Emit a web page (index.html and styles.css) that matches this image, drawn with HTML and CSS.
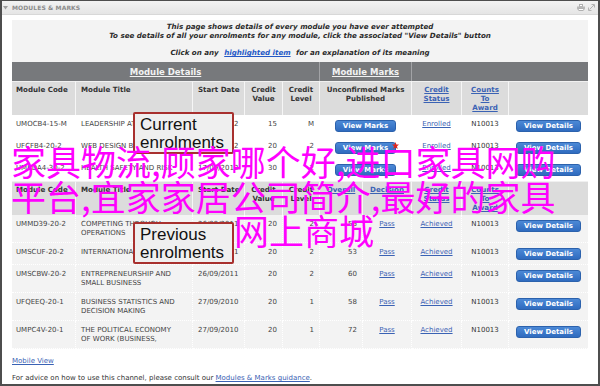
FILE: index.html
```html
<!DOCTYPE html>
<html lang="en">
<head>
    <meta charset="UTF-8">
    <meta name="viewport" content="width=device-width, initial-scale=1.0">
    <title>Modules &amp; Marks</title>
    <link rel="stylesheet" href="styles.css">
</head>
<body>
    <div class="portlet">
        <!-- title bar -->
        <div class="portlet-header">
            <svg class="toggle" width="5" height="4" viewBox="0 0 5 4"><path d="M0 0H5L2.5 3.5Z" fill="#a0a0a0"/></svg>
            <span class="portlet-title">MODULES &amp; MARKS</span>
            <span class="portlet-tools">
                <svg width="8" height="7" viewBox="0 0 8 7"><rect x="2.5" y="0.5" width="3" height="2" fill="#fff" stroke="#b0b0b0"/><rect x="0" y="2.5" width="8" height="3" fill="#b8b8b8"/><rect x="2" y="4.5" width="4" height="2" fill="#fff" stroke="#b0b0b0"/></svg>
                <svg width="7" height="7" viewBox="0 0 7 7"><path d="M1.5 5.5L6 1M3.5 0.5H6.5V3.5M0.5 3.5V6.5H3.5" fill="none" stroke="#b4b4b4"/></svg>
            </span>
        </div>

        <div class="portlet-body">
            <div class="intro">
                <p>This page shows details of every module you have ever attempted<br>
                To see details of all your enrolments for any module, click the associated "View Details" button</p>
                <p>Click on any <a href="#">highlighted item</a> for an explanation of its meaning</p>
            </div>

            <table class="marks">
                <colgroup>
                    <col style="width:64px"><col style="width:117px"><col style="width:52px"><col style="width:38px"><col style="width:37px">
                    <col style="width:43px"><col style="width:49px"><col style="width:50px"><col style="width:47px"><col style="width:79px">
                </colgroup>
                <tr class="group-head">
                    <th colspan="5"><a href="#">Module Details</a></th>
                    <th colspan="2"><a href="#">Module Marks</a></th>
                    <th colspan="3"></th>
                </tr>

                <!-- current enrolments -->
                <tr class="col-head">
                    <th class="left">Module Code</th>
                    <th class="left">Module Title</th>
                    <th class="left">Start Date</th>
                    <th>Credit Value</th>
                    <th>Credit Level</th>
                    <th colspan="2">Unconfirmed Marks Published</th>
                    <th><a href="#">Credit Status</a></th>
                    <th><a href="#">Counts<br>To<br>Award</a></th>
                    <th></th>
                </tr>
                <tr class="current">
                    <td>UMOCB4-15-M</td>
                    <td>LEADERSHIP AT WORK</td>
                    <td>24/09/2012</td>
                    <td class="num">15</td>
                    <td class="num">M</td>
                    <td colspan="2" class="mid"><a class="btn" href="#">View Marks</a></td>
                    <td class="mid"><a href="#">Enrolled</a></td>
                    <td class="mid">N10013</td>
                    <td class="mid"><a class="btn" href="#">View Details</a></td>
                </tr>
                <tr class="current">
                    <td>UFCFB4-20-2</td>
                    <td>WEB DESIGN BASICS</td>
                    <td>24/09/2012</td>
                    <td class="num">20</td>
                    <td class="num">2</td>
                    <td colspan="2" class="mid">
                        <span class="btn-wrap">
                            <a class="btn" href="#">View Marks</a>
                            <svg class="new-star" width="7" height="7" viewBox="0 0 7 7"><path d="M3.5 0L4.4 2.4L7 2.6L5 4.2L5.7 7L3.5 5.5L1.3 7L2 4.2L0 2.6L2.6 2.4Z" fill="#e0261e"/></svg>
                        </span>
                    </td>
                    <td class="mid"><a href="#">Enrolled</a></td>
                    <td class="mid">N10013</td>
                    <td class="mid"><a class="btn" href="#">View Details</a></td>
                </tr>
                <tr class="current">
                    <td>UMKDA4-30-2</td>
                    <td>HEALTH SAFETY AND RISK</td>
                    <td>17/09/2012</td>
                    <td class="num">30</td>
                    <td class="num">2</td>
                    <td colspan="2" class="mid"><a class="btn" href="#">View Marks</a></td>
                    <td class="mid"><a href="#">Enrolled</a></td>
                    <td class="mid">N10013</td>
                    <td class="mid"><a class="btn" href="#">View Details</a></td>
                </tr>

                <!-- previous enrolments -->
                <tr class="col-head">
                    <th class="left">Module Code</th>
                    <th class="left">Module Title</th>
                    <th class="left">Start Date</th>
                    <th>Credit Value</th>
                    <th>Credit Level</th>
                    <th><a href="#">Overall</a></th>
                    <th><a href="#">Decision</a></th>
                    <th><a href="#">Credit Status</a></th>
                    <th><a href="#">Counts<br>To<br>Award</a></th>
                    <th></th>
                </tr>
                <tr class="previous">
                    <td>UMMD39-20-2</td>
                    <td>COMPETING THROUGH<br>OPERATIONS</td>
                    <td>26/09/2011</td>
                    <td class="num">20</td>
                    <td class="num">2</td>
                    <td class="num">56</td>
                    <td class="mid"><a href="#">Pass</a></td>
                    <td class="mid"><a href="#">Achieved</a></td>
                    <td class="mid">N10013</td>
                    <td class="mid"><a class="btn" href="#">View Details</a></td>
                </tr>
                <tr class="previous">
                    <td>UMSCUF-20-2</td>
                    <td>INTERNATIONAL TRADE</td>
                    <td>26/09/2011</td>
                    <td class="num">20</td>
                    <td class="num">2</td>
                    <td class="num">53</td>
                    <td class="mid"><a href="#">Pass</a></td>
                    <td class="mid"><a href="#">Achieved</a></td>
                    <td class="mid">N10013</td>
                    <td class="mid"><a class="btn" href="#">View Details</a></td>
                </tr>
                <tr class="previous">
                    <td>UMSCBW-20-2</td>
                    <td>ENTREPRENEURSHIP AND<br>SMALL BUSINESS</td>
                    <td>26/09/2011</td>
                    <td class="num">20</td>
                    <td class="num">2</td>
                    <td class="num">60</td>
                    <td class="mid"><a href="#">Pass</a></td>
                    <td class="mid"><a href="#">Achieved</a></td>
                    <td class="mid">N10013</td>
                    <td class="mid"><a class="btn" href="#">View Details</a></td>
                </tr>
                <tr class="previous">
                    <td>UFQEEQ-20-1</td>
                    <td>BUSINESS STATISTICS AND<br>DECISION MAKING</td>
                    <td>27/09/2010</td>
                    <td class="num">20</td>
                    <td class="num">1</td>
                    <td class="num">58</td>
                    <td class="mid"><a href="#">Pass</a></td>
                    <td class="mid"><a href="#">Achieved</a></td>
                    <td class="mid">N10013</td>
                    <td class="mid"><a class="btn" href="#">View Details</a></td>
                </tr>
                <tr class="previous">
                    <td>UMPC4V-20-1</td>
                    <td>THE POLITICAL ECONOMY<br>OF WORK (BUSINESS,</td>
                    <td>27/09/2010</td>
                    <td class="num">20</td>
                    <td class="num">1</td>
                    <td class="num">72</td>
                    <td class="mid"><a href="#">Pass</a></td>
                    <td class="mid"><a href="#">Achieved</a></td>
                    <td class="mid">N10013</td>
                    <td class="mid"><a class="btn" href="#">View Details</a></td>
                </tr>
            </table>

            <div class="footer">
                <a href="#">Mobile View</a>
                <p>For advice on how to use this channel, please consult our <a href="#">Modules &amp; Marks guidance</a>.</p>
            </div>
        </div>

        <!-- annotations drawn over the page -->
        <div class="callout callout-current">Current<br>enrolments</div>
        <div class="callout callout-previous">Previous<br>enrolments</div>

        <div class="watermark">
            <div>家具物流,顾家哪个好,进口家具网购</div>
            <div>平台,宜家家居公司简介,最好的家具</div>
            <div class="watermark-last">网上商城</div>
        </div>
    </div>
</body>
</html>
```

FILE: styles.css
```css
/* reset */
* {
    margin: 0;
    padding: 0;
    box-sizing: border-box;
}

body {
    font-family: "DejaVu Sans", Verdana, sans-serif;
    font-size: 7px;
    color: #444;
    background: #fff;
}

a {
    color: #3a62b4;
    text-decoration: underline;
}

/* outer frame */
.portlet {
    position: relative;
    width: 600px;
    height: 386px;
    border: 2px solid #4e4e4e;
    border-top-width: 1px;
    overflow: hidden;
}

.portlet-header {
    height: 14px;
    display: flex;
    align-items: center;
    padding: 0 3px 0 1px;
    background: linear-gradient(#f3f3f3, #e5e5e5);
    border-bottom: 1px solid #d8d8d8;
}

.toggle {
    margin-right: 4px;
}

.portlet-title {
    flex: 1;
    font-size: 6px;
    font-weight: bold;
    color: #8c8c8c;
    letter-spacing: 0.1px;
}

.portlet-tools {
    display: flex;
    gap: 3px;
    align-items: center;
}

.portlet-body {
    padding: 5px 10px 0;
}

/* intro box */
.intro {
    background: #f3f3f3;
    text-align: center;
    font-weight: bold;
    font-style: italic;
    font-size: 7.1px;
    line-height: 8.8px;
    color: #2a2a2a;
    padding: 3px 0 3.8px;
}

.intro p + p {
    margin-top: 8.8px;
}

.intro a {
    color: #2458c6;
    margin: 0 3px;
}

/* marks table */
.marks {
    width: 576px;
    table-layout: fixed;
    border-collapse: separate;
    border-spacing: 0;
}

.group-head th {
    height: 19.5px;
    background: #77797c;
    font-size: 8.5px;
    text-align: center;
    vertical-align: middle;
    border-right: 1px solid #a2a3a6;
}

.group-head th:last-child {
    border-right: none;
}

.group-head a {
    color: #f2f2f2;
}

.col-head th {
    background: #dcdcdc;
    color: #333;
    font-weight: bold;
    font-size: 7.1px;
    line-height: 9px;
    text-align: center;
    vertical-align: top;
    white-space: normal;
    padding: 2.5px 3px 3.5px;
    border-top: 1px solid #f0f0f0;
    border-right: 1px solid #f6f6f6;
}

.col-head th.left {
    text-align: left;
    padding-left: 5px;
    padding-right: 2px;
}

.col-head th:first-child {
    padding-left: 4px;
}

.col-head th:last-child {
    border-right: none;
}

.marks td {
    padding: 5px 5px 4px;
    line-height: 8.9px;
    vertical-align: top;
    border-right: 1px dotted #fff;
    border-bottom: 1px dotted #fff;
    white-space: nowrap;
}

.marks td:first-child {
    padding-left: 4px;
}

.marks td:last-child {
    border-right: none;
}

.current td {
    background: #fff;
}

.previous td {
    background: #f3f3f3;
}

.marks td.num {
    text-align: right;
}

.marks td.mid {
    text-align: center;
    color: #333;
}

/* blue buttons */
.btn {
    display: inline-block;
    height: 12px;
    line-height: 10px;
    padding: 0 7px;
    vertical-align: top;
    font-weight: bold;
    color: #fff;
    text-decoration: none;
    background: linear-gradient(#4c89d6, #2f6bbf);
    border: 1px solid #2c62ad;
    border-radius: 3px;
}

.btn-wrap {
    position: relative;
    display: inline-block;
    vertical-align: top;
}

.new-star {
    position: absolute;
    right: -3px;
    top: 0;
}

/* footer links */
.footer {
    margin-top: 8px;
    line-height: 8.8px;
    color: #333;
}

.footer p {
    margin-top: 8.5px;
}

/* red-bordered notes */
.callout {
    position: absolute;
    left: 131px;
    width: 101px;
    padding: 2px 5px 1px;
    font-family: "Liberation Sans", Arial, sans-serif;
    font-size: 17px;
    line-height: 17.5px;
    color: #111;
    background: #efefef;
    border: 2px solid #a8302e;
    border-radius: 2px;
}

.callout-current {
    top: 111px;
}

.callout-previous {
    top: 221px;
}

/* magenta overlay text */
.watermark {
    position: absolute;
    left: 9px;
    top: 143px;
    font-family: "Noto Sans CJK SC", sans-serif;
    font-size: 35px;
    line-height: 34.5px;
    color: #ff00ff;
    white-space: nowrap;
}

.watermark-last {
    padding-left: 223px;
}
```
